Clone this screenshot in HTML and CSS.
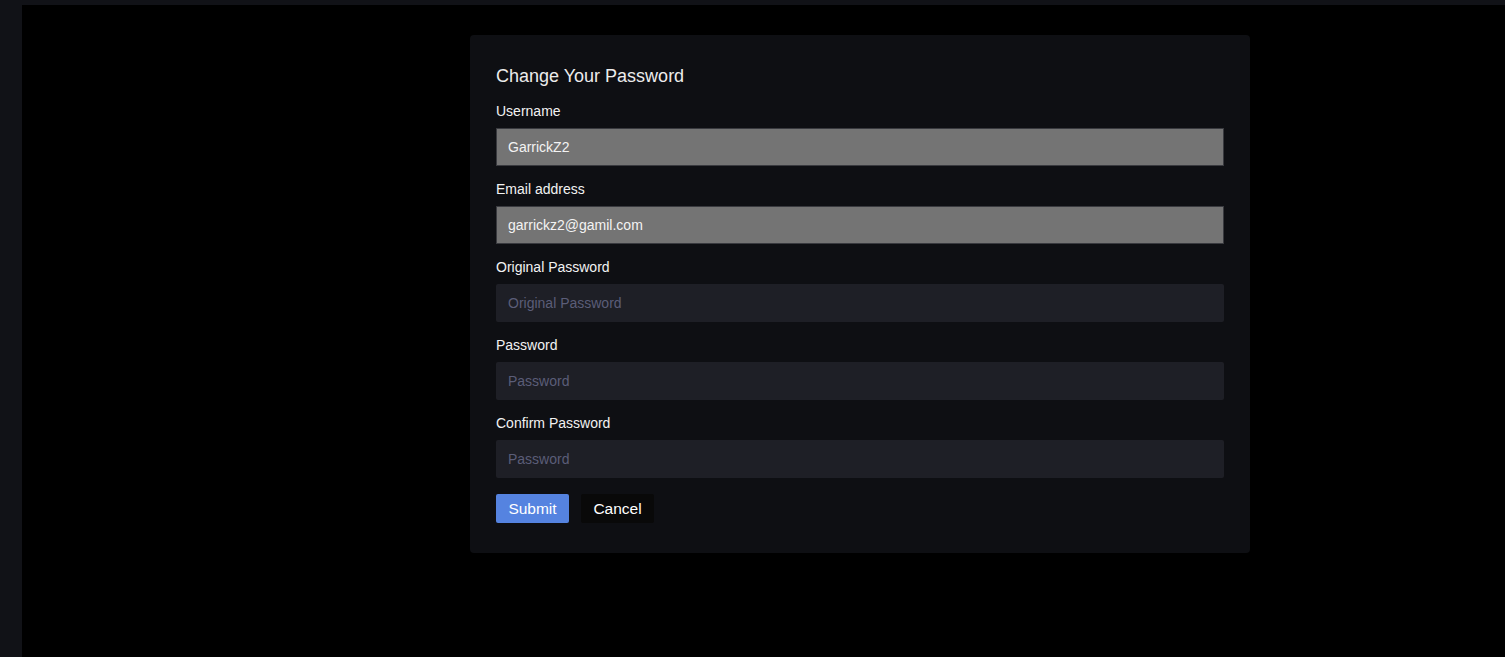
FILE: index.html
```html
<!DOCTYPE html>
<html>
<head>
<meta charset="utf-8">
<link rel="stylesheet" href="styles.css">
</head>
<body>
<div class="app">
  <aside class="sidebar"></aside>
  <div class="content">
    <div class="topbar"></div>
    <main class="main">
      <form class="card">
        <h2 class="title">Change Your Password</h2>
        <div class="field">
          <label class="label">Username</label>
          <input class="input input-readonly" type="text" value="GarrickZ2" readonly>
        </div>
        <div class="field">
          <label class="label">Email address</label>
          <input class="input input-readonly" type="text" value="garrickz2@gamil.com" readonly>
        </div>
        <div class="field">
          <label class="label">Original Password</label>
          <input class="input" type="password" placeholder="Original Password">
        </div>
        <div class="field">
          <label class="label">Password</label>
          <input class="input" type="password" placeholder="Password">
        </div>
        <div class="field">
          <label class="label">Confirm Password</label>
          <input class="input" type="password" placeholder="Password">
        </div>
        <div class="actions">
          <button type="button" class="btn btn-primary">Submit</button>
          <button type="button" class="btn btn-secondary">Cancel</button>
        </div>
      </form>
    </main>
  </div>
</div>
</body>
</html>
```
FILE: styles.css
```css
* { box-sizing: border-box; }
html, body {
  margin: 0;
  padding: 0;
  height: 100%;
  background: #000;
  font-family: "Liberation Sans", Arial, Helvetica, sans-serif;
  color: #fff;
  overflow: hidden;
}
.app {
  display: flex;
  height: 657px;
}
.sidebar {
  width: 22px;
  flex: 0 0 22px;
  background: #111217;
}
.content {
  flex: 1;
  display: flex;
  flex-direction: column;
}
.topbar {
  height: 5px;
  background: #111217;
}
.main {
  flex: 1;
  background: #000;
  padding: 30px 0 0 448px;
}
.card {
  width: 780px;
  background: #0e0f13;
  border-radius: 4px;
  padding: 28px 26px 30px 26px;
}
.title {
  margin: 0 0 13px 0;
  font-size: 18px;
  line-height: 27px;
  font-weight: 400;
  color: #ececec;
}
.field {
  display: flex;
  flex-direction: column;
  margin-bottom: 15px;
}
.label {
  font-size: 14px;
  line-height: 17px;
  color: #f2f2f2;
  margin-bottom: 8px;
}
.input {
  height: 38px;
  width: 100%;
  border: 1px solid transparent;
  border-radius: 2px;
  background: #1e1f26;
  color: #e6e6e6;
  font-family: inherit;
  font-size: 14px;
  padding: 0 11px;
  outline: none;
}
.input::placeholder {
  color: #5b5d78;
}
.input-readonly {
  background: #747474;
  border-color: #393a3f;
  color: #f3f3f3;
  border-radius: 0;
}
.actions {
  display: flex;
  gap: 12px;
  padding-top: 1px;
}
.btn {
  height: 29px;
  width: 73px;
  border: none;
  border-radius: 2px;
  font-family: inherit;
  font-size: 15.5px;
  color: #fff;
  padding: 0;
  cursor: pointer;
}
.btn-primary {
  background: #5583e0;
}
.btn-secondary {
  background: #090909;
}
```
